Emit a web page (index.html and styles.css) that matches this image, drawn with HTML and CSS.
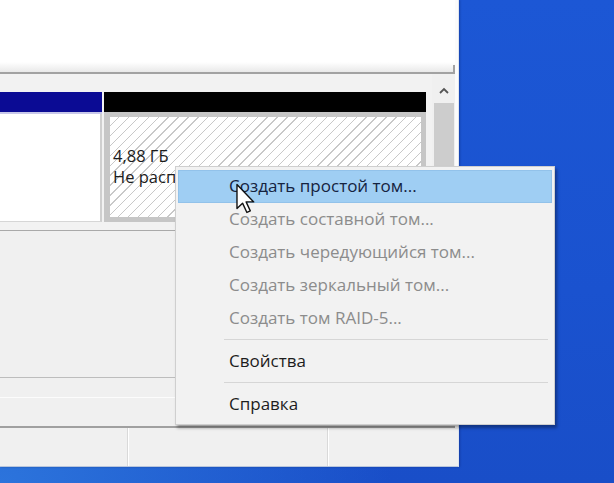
FILE: index.html
```html
<!DOCTYPE html>
<html lang="ru">
<head>
  <meta charset="UTF-8" />
  <meta name="viewport" content="width=device-width, initial-scale=1.0"/>
  <title>Управление дисками</title>
  <link rel="stylesheet" href="styles.css">
</head>
<body>
  <div class="desktop">
    <div class="window">
      <div class="list-pane"></div>

      <div class="disk-pane">
        <div class="disk-area">
          <div class="disk-row">
            <div class="part part-primary">
              <div class="part-head"></div>
              <div class="part-body"></div>
            </div>
            <div class="part part-free">
              <div class="part-head"></div>
              <div class="part-frame">
                <div class="part-hatch">
                  <span>4,88 ГБ</span>
                  <span>Не распределена</span>
                </div>
              </div>
            </div>
          </div>
          <div class="disk-empty"></div>
        </div>
        <div class="vscroll">
          <div class="vscroll-up">
            <svg width="10" height="7" viewBox="0 0 10 7">
              <path d="M1 6 L5 2 L9 6" fill="none" stroke="#555" stroke-width="1.8"/>
            </svg>
          </div>
          <div class="vscroll-thumb"></div>
        </div>
      </div>

      <div class="legend"></div>

      <div class="statusbar">
        <div class="status-cell cell-1"></div>
        <div class="status-cell cell-2"></div>
        <div class="status-cell cell-3"></div>
      </div>
    </div>

    <ul class="context-menu">
      <li class="menu-item is-active">Создать простой том...</li>
      <li class="menu-item is-disabled">Создать составной том...</li>
      <li class="menu-item is-disabled">Создать чередующийся том...</li>
      <li class="menu-item is-disabled">Создать зеркальный том...</li>
      <li class="menu-item is-disabled">Создать том RAID-5...</li>
      <li class="menu-sep"></li>
      <li class="menu-item">Свойства</li>
      <li class="menu-sep"></li>
      <li class="menu-item">Справка</li>
    </ul>

    <!-- mouse pointer -->
    <svg class="pointer" width="21" height="31" viewBox="0 0 13 20">
      <path d="M1 1 L1 16.5 L4.6 13 L7.4 19 L9.6 18 L6.9 12.2 L11.8 12.2 Z"
            fill="#fff" stroke="#111" stroke-width="0.9" stroke-linejoin="round"/>
    </svg>
  </div>
</body>
</html>
```

FILE: styles.css
```css
* {
  box-sizing: border-box;
}

body {
  margin: 0;
  font-family: "Open Sans", "Noto Sans", sans-serif;
  overflow: hidden;
}

.desktop {
  position: relative;
  width: 614px;
  height: 483px;
  background:
    radial-gradient(ellipse at 0% 100%, #2c74dc 0, rgba(44,116,220,0) 45%),
    linear-gradient(180deg, #1c57d5 0%, #1a52cf 60%, #194ec8 100%);
}

/* main window */
.window {
  width: 459px;
  height: 467px;
  background: #fbfbfb;
  border-right: 1px solid #dfe5ef;
  border-bottom: 1px solid #b9c6dc;
  display: flex;
  flex-direction: column;
  box-shadow: 1px 0 2px rgba(0,0,40,0.25);
}

.list-pane {
  position: relative;
  height: 74px;
  margin-right: 3px;
  background: linear-gradient(180deg, #fff 0, #fff 62px, #e9e9e9 72px);
  border-bottom: 2px solid #a2a2a2;
}

.list-pane::after {
  content: "";
  position: absolute;
  right: 0;
  bottom: 0;
  width: 2px;
  height: 7px;
  background: #a2a2a2;
}

/* graphical disk view */
.disk-pane {
  height: 304px;
  display: flex;
  background: #f2f2f2;
  margin-right: 3px;
  border-bottom: 1px solid #bdbdbd;
}

.disk-area {
  width: 426px;
  padding-top: 18px;
  display: flex;
  flex-direction: column;
}

.disk-row {
  display: flex;
  height: 130px;
  gap: 2px;
}

.part {
  display: flex;
  flex-direction: column;
}

.part-head {
  height: 20px;
}

.part-primary {
  width: 102px;
}

.part-primary .part-head {
  background: #0b0b94;
  border-bottom: 2px solid #c8c8ea;
  height: 22px;
}

.part-primary .part-body {
  height: 108px;
  background: #fff;
  border-right: 2px solid #cfcfcf;
  border-bottom: 1px solid #d6d6d6;
}

.part-free {
  width: 322px;
}

.part-free .part-head {
  background: #000;
}

.part-frame {
  height: 110px;
  background: #c6c6c6;
  padding: 5px 5px 5px 6px;
}

.part-hatch {
  height: 100%;
  padding: 28px 0 0 3px;
  display: flex;
  flex-direction: column;
  font-size: 16.5px;
  line-height: 21px;
  color: #1c1c1c;
  white-space: nowrap;
  overflow: hidden;
  background: repeating-linear-gradient(135deg,
    #fff 0, #fff 6px, #c8c8c8 6px, #c8c8c8 7px);
}

.disk-empty {
  flex: 1;
  margin-top: 8px;
  border-top: 1px solid #a9a9a9;
  background: #f0f0f0;
}

.vscroll {
  width: 23px;
  margin-left: 6px;
  padding-top: 4px;
  background: #f0f0f0;
}

.vscroll-up {
  height: 25px;
  display: flex;
  align-items: center;
  justify-content: center;
}

.vscroll-thumb {
  height: 200px;
  margin: 0 1px 0 2px;
  background: #cdcdcd;
}

/* legend strip under the disk view */
.legend {
  height: 50px;
  margin-right: 3px;
  background: linear-gradient(180deg, #f0f0f0 0, #f0f0f0 19px, #fcfcfc 19px, #fcfcfc 20px, #f0f0f0 20px);
  border-bottom: 2px solid #a0a0a0;
}

.statusbar {
  flex: 1;
  display: flex;
  background: #f0f0f0;
}

.status-cell {
  border-right: 1px solid #d9d9d9;
  box-shadow: 1px 0 0 #fff;
}

.cell-1 { width: 128px; }
.cell-2 { width: 200px; }
.cell-3 { flex: 1; border-right: 0; box-shadow: none; }

/* context menu */
.context-menu {
  position: absolute;
  left: 175px;
  top: 166px;
  width: 380px;
  height: 259px;
  margin: 0;
  padding: 3px 2px;
  list-style: none;
  background: #f2f2f2;
  border: 1px solid #cfcfcf;
  box-shadow: 2px 3px 3px rgba(0,0,0,0.35);
}

.menu-item {
  height: 33px;
  line-height: 32px;
  padding-left: 51px;
  font-size: 17px;
  color: #1d1d1d;
  white-space: nowrap;
}

.menu-item.is-disabled {
  color: #8c8c8c;
}

.menu-item.is-active {
  background: #9fcef3;
  border: 1px solid #92c2ea;
  padding-left: 50px;
  line-height: 30px;
  color: #15233f;
}

.menu-sep {
  height: 1px;
  margin: 4px 4px 5px 46px;
  background: #d6d6d6;
}

.pointer {
  position: absolute;
  left: 235px;
  top: 183px;
}
```
